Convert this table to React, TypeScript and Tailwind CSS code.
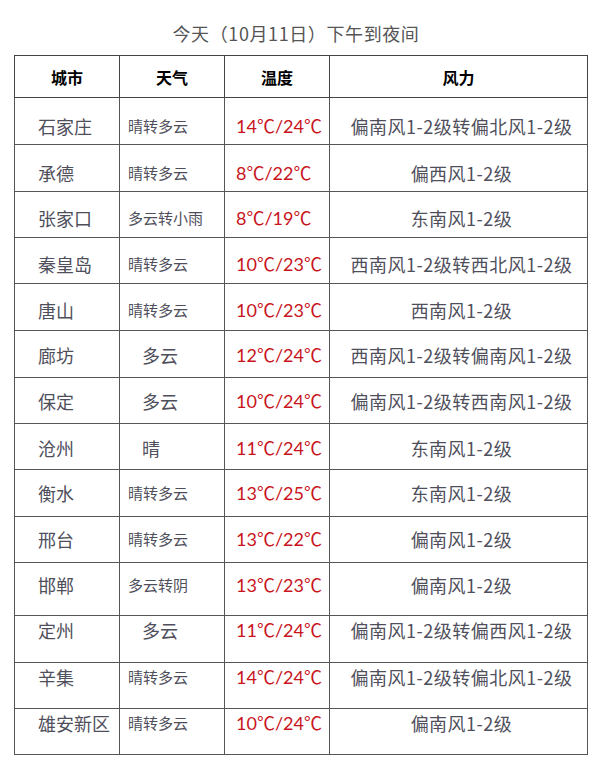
const rows = [
  { city: "石家庄", weather: "晴转多云", temp: "14℃/24℃", wind: "偏南风1-2级转偏北风1-2级", h: 47, pt: 16 },
  { city: "承德", weather: "晴转多云", temp: "8℃/22℃", wind: "偏西风1-2级", h: 47, pt: 16 },
  { city: "张家口", weather: "多云转小雨", temp: "8℃/19℃", wind: "东南风1-2级", h: 46, pt: 14 },
  { city: "秦皇岛", weather: "晴转多云", temp: "10℃/23℃", wind: "西南风1-2级转西北风1-2级", h: 46, pt: 14 },
  { city: "唐山", weather: "晴转多云", temp: "10℃/23℃", wind: "西南风1-2级", h: 47, pt: 14 },
  { city: "廊坊", weather: "多云", temp: "12℃/24℃", wind: "西南风1-2级转偏南风1-2级", h: 47, pt: 12 },
  { city: "保定", weather: "多云", temp: "10℃/24℃", wind: "偏南风1-2级转西南风1-2级", h: 46, pt: 11 },
  { city: "沧州", weather: "晴", temp: "11℃/24℃", wind: "东南风1-2级", h: 46, pt: 12 },
  { city: "衡水", weather: "晴转多云", temp: "13℃/25℃", wind: "东南风1-2级", h: 47, pt: 11 },
  { city: "邢台", weather: "晴转多云", temp: "13℃/22℃", wind: "偏南风1-2级", h: 46, pt: 10 },
  { city: "邯郸", weather: "多云转阴", temp: "13℃/23℃", wind: "偏南风1-2级", h: 53, pt: 10 },
  { city: "定州", weather: "多云", temp: "11℃/24℃", wind: "偏南风1-2级转偏西风1-2级", h: 47, pt: 2 },
  { city: "辛集", weather: "晴转多云", temp: "14℃/24℃", wind: "偏南风1-2级转偏北风1-2级", h: 46, pt: 2 },
  { city: "雄安新区", weather: "晴转多云", temp: "10℃/24℃", wind: "偏南风1-2级", h: 46, pt: 2 },
];

export default function App() {
  return (
    <div className="w-[600px] h-[775px] bg-white pt-[21px] font-['Noto_Sans_CJK_SC',sans-serif]">
      {/* Title */}
      <div className="text-center text-[18px] leading-[24px] tracking-[0.6px] text-[#555] mb-[10px] pr-[8px]">
        今天（10月11日）下午到夜间
      </div>

      <table className="ml-[14px] w-[574px] table-fixed border-collapse border border-[#444]">
        <colgroup>
          <col className="w-[105px]" />
          <col className="w-[105px]" />
          <col className="w-[105px]" />
          <col />
        </colgroup>
        <thead>
          <tr className="h-[42px]">
            {["城市", "天气", "温度", "风力"].map((t) => (
              <th
                key={t}
                className="border border-[#444] text-center align-middle text-[16px] font-bold text-black leading-[22px]"
              >
                {t}
              </th>
            ))}
          </tr>
        </thead>
        <tbody>
          {rows.map((r) => (
            <tr key={r.city} style={{ height: r.h }}>
              <td
                className="border border-[#555] align-top pl-[23px] text-[18px] leading-[24px] text-[#4f4f5c] whitespace-nowrap"
                style={{ paddingTop: r.pt }}
              >
                {r.city}
              </td>
              <td
                className={
                  r.weather.length > 2
                    ? "border border-[#555] align-top pl-[8px] text-[15px] leading-[24px] text-[#4f4f5c] whitespace-nowrap"
                    : "border border-[#555] align-top pl-[22px] text-[18px] leading-[24px] text-[#4f4f5c] whitespace-nowrap"
                }
                style={{ paddingTop: r.pt }}
              >
                {r.weather}
              </td>
              <td
                className="border border-[#555] align-top pl-[11px] text-[18px] leading-[24px] text-[#c8141c] whitespace-nowrap font-['Lato','Noto_Sans_CJK_SC',sans-serif]"
                style={{ paddingTop: r.pt }}
              >
                {r.temp}
              </td>
              <td
                className="border border-[#555] align-top text-center pl-[6px] text-[18px] leading-[24px] tracking-[0.5px] text-[#4f4f5c] whitespace-nowrap"
                style={{ paddingTop: r.pt }}
              >
                {r.wind}
              </td>
            </tr>
          ))}
        </tbody>
      </table>
    </div>
  );
}
